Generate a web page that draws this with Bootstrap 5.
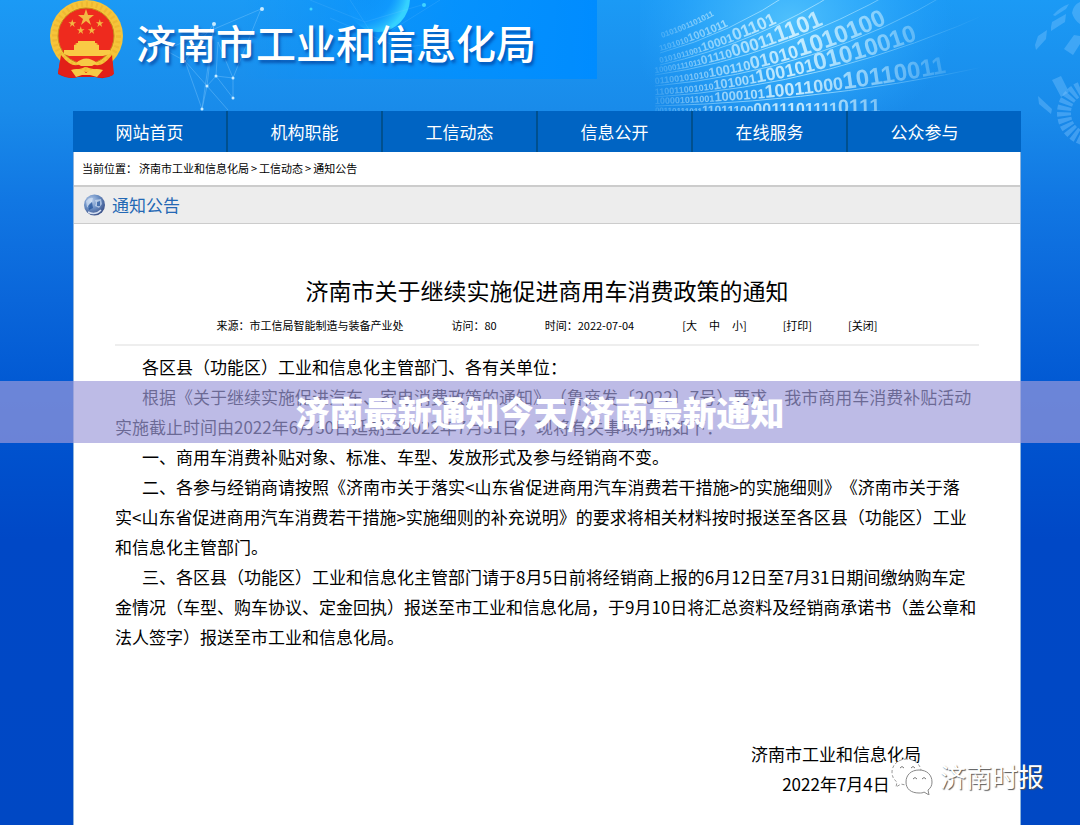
<!DOCTYPE html>
<html lang="zh-CN">
<head>
<meta charset="utf-8">
<meta name="viewport" content="width=device-width, initial-scale=1">
<title>济南市工业和信息化局 - 通知公告</title>
<link rel="stylesheet" href="https://cdn.jsdelivr.net/npm/bootstrap@5.3.0/dist/css/bootstrap.min.css">
<style>
  body {
    font-family: "Noto Sans CJK SC", sans-serif;
    color: #000;
    background: #0048c4;
    text-spacing-trim: space-all;
  }
  a { color: inherit; text-decoration: none; }
  .site {
    min-height: 100vh;
    padding: 0 59px 0 73px;
    overflow: hidden;
    background: linear-gradient(#1b9af5 0, #198bea 110px, #1177e3 200px, #0a66da 300px, #0057d2 400px, #0048c6 540px, #0048c4 100%);
  }
  .masthead { height: 111px; }
  .decor { position: absolute; top: 0; pointer-events: none; }
  .decor-left { left: 0; }
  .decor-right { right: 0; }
  .brand-row { margin-left: -24px; gap: 12px; height: 79px; }
  .site-name {
    font-size: 40px; line-height: 56px; font-weight: 500; color: #fff;
    text-shadow: 2px 3px 3px rgba(0, 50, 140, .6);
    margin: 4px 0 0;
  }
  .sheet { min-height: calc(100vh - 111px); }
  .page-side { border: solid #8fb4dc; border-width: 0 1px; }
  .main-menu { background: #0064c3; height: 41px; }
  .main-menu .nav-link {
    width: 155px; padding: 0; line-height: 41px; font-size: 17px; color: #fff;
    text-align: center; border-right: 2px solid #00508f;
  }
  .main-menu .nav-item:last-child .nav-link { border-right-color: transparent; }
  .crumbs { font-size: 11px; line-height: 33px; padding-left: 8px; gap: 2px; }
  .channel {
    height: 39px; padding-left: 9px; gap: 6px; background: #ededed;
    border-top: 2px solid #ccc; border-bottom: 1px solid #ccc;
  }
  .channel h2 { font-size: 17px; line-height: 36px; font-weight: 400; color: #2468b4; margin: 0; }
  .article { padding: 48px 41px 24px; }
  .article h1 { font-size: 23px; line-height: 36px; font-weight: 400; text-align: center; margin: 0; }
  .meta {
    font-size: 11px; line-height: 20px; padding: 7px 0 9px; gap: 36px;
    border-bottom: 2px solid #eee;
  }
  .meta .wide { margin-right: 12px; }
  .meta .sizes { gap: 12px; }
  .meta button { border: 0; padding: 0; background: none; color: inherit; }
  .content { font-size: 17px; line-height: 30px; margin-top: 6px; }
  .content p { margin: 0; text-indent: 27px; }
  .signature { font-size: 17px; line-height: 30px; margin: 87px 58px 0 0; }
  .headline-band {
    position: absolute; left: 0; right: 0; top: 381px;
    background: rgba(157, 155, 218, .68); color: #fff;
    font-size: 34px; line-height: 62px; font-weight: 900;
  }
  .watermark {
    position: absolute; right: 36px; top: 757px; gap: 6px;
    font-size: 26px; line-height: 38px; color: #fff;
    text-shadow: 1px 1px 1px #555;
  }
</style>
</head>
<body>
<div class="site position-relative">

  <svg class="decor decor-left" width="600" height="111" aria-hidden="true">
    <defs>
      <linearGradient id="panel" x1="0" x2="1"><stop offset="0" stop-color="#0090ff" stop-opacity="0"/><stop offset=".6" stop-color="#0090ff" stop-opacity=".8"/><stop offset="1" stop-color="#008cff"/></linearGradient>
      <radialGradient id="globe" cx=".2" cy=".3" r=".8"><stop offset="0" stop-color="#0a8df5" stop-opacity="0"/><stop offset=".7" stop-color="#129cff" stop-opacity=".6"/><stop offset="1" stop-color="#35d2ff"/></radialGradient>
    </defs>
    <rect x="240" width="357" height="79" fill="url(#panel)"/>
    <ellipse cx="378" cy="-2" rx="32" ry="34" fill="url(#globe)"/>
    <g fill="none" stroke="#8fd0ff" stroke-opacity=".35">
      <path d="M261 9 165 50 185 61 214 24 202 109M261 9 233 78M185 61 207 86 228 110M214 24 207 86M216 76 207 86 202 109M216 76 233 78 233 98 216 76 218 42 233 78M185 61 202 109"/>
      <path d="M310 0 365 22 425 4M330 18 400 48 460 40M350 0 376 40 440 0" stroke-opacity=".15"/>
    </g>
    <g fill="#c8ebff"><circle cx="262" cy="9" r="2"/><circle cx="214" cy="24" r="2"/><circle cx="185" cy="61" r="1"/><circle cx="216" cy="76" r="1.500"/><circle cx="207" cy="86" r="1.500"/><circle cx="233" cy="78" r="1.500"/><circle cx="233" cy="98" r="1.500"/><circle cx="202" cy="109" r="1.500"/></g>
    <g fill="#3fd4ff"><circle cx="311" cy="9" r="1.500"/><circle cx="424" cy="5" r="2"/></g>
  </svg>

  <svg class="decor decor-right" width="440" height="150" viewBox="640 0 440 150" aria-hidden="true">
    <defs>
      <radialGradient id="glow"><stop offset="0" stop-color="#5ccaff" stop-opacity=".8"/><stop offset=".5" stop-color="#40b8ff" stop-opacity=".5"/><stop offset="1" stop-color="#2aa4ff" stop-opacity="0"/></radialGradient>
      <linearGradient id="fade" x1="0" x2="1"><stop offset="0" stop-color="#fff" stop-opacity="0"/><stop offset=".12" stop-color="#fff" stop-opacity=".5"/><stop offset=".35" stop-color="#fff" stop-opacity=".9"/><stop offset=".55" stop-color="#fff" stop-opacity=".5"/><stop offset=".78" stop-color="#fff" stop-opacity="0"/></linearGradient>
      <mask id="sweep" maskUnits="userSpaceOnUse" x="640" y="0" width="440" height="111"><rect x="640" width="440" height="111" fill="url(#fade)"/></mask>
      <path id="w1" d="M655 113Q800 117 1040 108"/>
      <path id="w2" d="M655 104Q850 99 1040 52"/>
      <path id="w3" d="M655 95Q830 84 1000 6"/>
      <path id="w4" d="M655 84Q820 69 950 -10"/>
      <path id="w5" d="M655 73Q780 55 900 -14"/>
      <path id="w6" d="M660 63Q760 40 840 -12"/>
      <path id="w7" d="M660 51Q730 32 795 -12"/>
      <path id="w8" d="M662 38Q710 22 760 -12"/>
    </defs>
    <ellipse cx="790" cy="20" rx="165" ry="125" fill="url(#glow)"/>
    <g mask="url(#sweep)" fill="#d8f4ff" font-family="Liberation Sans, sans-serif" font-weight="700">
      <text font-size="8"><textPath href="#w1">00110111011<tspan font-size="12">11011100</tspan><tspan font-size="16">0011101111</tspan><tspan font-size="20">0111</tspan></textPath></text>
      <text font-size="9"><textPath href="#w2">100001011001<tspan font-size="13">1000101</tspan><tspan font-size="18">10011000</tspan><tspan font-size="24">10110011</tspan></textPath></text>
      <text font-size="9"><textPath href="#w3">110011001010<tspan font-size="13">101001</tspan><tspan font-size="18">100101</tspan><tspan font-size="24">01010010</tspan></textPath></text>
      <text font-size="9"><textPath href="#w4">01100101010<tspan font-size="13">100110</tspan><tspan font-size="18">01010</tspan><tspan font-size="24">1010100</tspan></textPath></text>
      <text font-size="8"><textPath href="#w5">10000111011<tspan font-size="12">01110</tspan><tspan font-size="17">00011</tspan><tspan font-size="23">1101</tspan></textPath></text>
      <text font-size="8"><textPath href="#w6">0101011001<tspan font-size="12">10001</tspan><tspan font-size="17">01101</tspan></textPath></text>
      <text font-size="8"><textPath href="#w7">1101010<tspan font-size="11">1001011</tspan></textPath></text>
      <text font-size="8"><textPath href="#w8">0101001101011</textPath></text>
      <g fill="none" stroke="#a8e2ff" stroke-width="1" transform="translate(0 2)">
        <use href="#w2"/><use href="#w3"/><use href="#w4"/><use href="#w5"/><use href="#w6"/><use href="#w7"/>
      </g>
    </g>
    <g fill="#7cc4ff" fill-opacity=".38">
      <path d="M1035 45 1038 36 1047 30 1046 39 1036 50ZM1051 27 1052 22 1066 14 1065 22 1051 31ZM1053 15Q1060 7 1069 4L1066 9 1055 16ZM1072 13Q1073 5 1080 2V24Q1074 20 1072 13ZM1064 49 1074 35 1080 36V44L1073 55ZM1052 80 1061 76 1069 92 1061 97ZM1038 96 1052 109 1051 114 1039 104Z"/>
    </g>
    <circle cx="1090" cy="113" r="26" fill="none" stroke="#7cc4ff" stroke-opacity=".4" stroke-width="14" stroke-dasharray="4 2"/>
  </svg>

  <header class="masthead position-relative">
    <div class="brand-row d-flex align-items-center">
      <svg width="75" height="79" viewBox="0 0 75 79" role="img" aria-label="国徽">
        <path d="M12 55 9 74Q20 80 29 77H46Q56 80 64 75L63 54Z" fill="#d81912"/>
        <ellipse cx="37.500" cy="36" rx="36.500" ry="36" fill="#f6c43a"/>
        <ellipse cx="37.500" cy="36" rx="32" ry="32" fill="none" stroke="#dfa01f" stroke-width="5" stroke-dasharray="2 3" opacity=".3"/>
        <ellipse cx="37" cy="36" rx="28" ry="28" fill="#ee2a1e" stroke="#c48a1b"/>
        <g fill="#f3b843">
          <path id="star" d="m37 9 2 6h6l-5 4 2 6-5-4-5 4 2-6-5-4h6z"/>
          <use href="#star" transform="translate(5.500 15) scale(.48)"/><use href="#star" transform="translate(33 15) scale(.48)"/>
          <use href="#star" transform="translate(14 22) scale(.48)"/><use href="#star" transform="translate(25 22) scale(.48)"/>
        </g>
        <path d="M15 54V50H25V45L28 44 26 43H29V41H46V43H49L47 44 50 45V50H61V54L54 56H20Z" fill="#f9ca45"/>
        <path d="M12 55Q23 69 31 64 37 55 44 64 52 69 63 55L65 74Q60 78 47 77L53 71 40 68Q36 66 34 68L22 71 28 77Q18 79 9 73Z" fill="#e22018"/>
        <path d="M27 63Q37 54 48 63L43 66H32ZM22 70Q31 67 37 73 44 67 54 70L48 77 41 75H33L27 77Z" fill="#f7ca45"/>
      </svg>
      <div class="site-name">济南市工业和信息化局</div>
    </div>
  </header>

  <div class="sheet position-relative bg-white d-flex flex-column">
    <nav class="main-menu">
      <ul class="nav">
        <li class="nav-item"><a class="nav-link" href="#">网站首页</a></li>
        <li class="nav-item"><a class="nav-link" href="#">机构职能</a></li>
        <li class="nav-item"><a class="nav-link" href="#">工信动态</a></li>
        <li class="nav-item"><a class="nav-link" href="#">信息公开</a></li>
        <li class="nav-item"><a class="nav-link" href="#">在线服务</a></li>
        <li class="nav-item"><a class="nav-link" href="#">公众参与</a></li>
      </ul>
    </nav>

    <div class="page-side flex-grow-1">
      <div class="crumbs d-flex"><span>当前位置：</span><a href="#">济南市工业和信息化局</a><span>&gt;</span><a href="#">工信动态</a><span>&gt;</span><a href="#">通知公告</a></div>

      <div class="channel d-flex align-items-center">
        <svg width="23" height="23" viewBox="0 0 23 23" aria-hidden="true">
          <defs><radialGradient id="ball" cx=".35" cy=".3" r=".75"><stop offset="0" stop-color="#b9cdea"/><stop offset=".5" stop-color="#6b8fc4"/><stop offset="1" stop-color="#3a4f86"/></radialGradient></defs>
          <circle cx="11.500" cy="11" r="10.500" fill="url(#ball)"/>
          <path d="M3 7Q6 3 10 4L9 8 6 10 7 14 4 13ZM12 6 18 5 19 10 16 14 12 12 13 9Z" fill="#e4eefc" opacity=".55"/>
          <path d="M5 12 9 8 10 14 6 16ZM14 8 17 7 17 12 14 12Z" fill="#1c4f98" opacity=".7"/>
          <path d="M5 18Q12 22 18 16" stroke="#d4def0" stroke-width="1.500" fill="none"/>
        </svg>
        <h2>通知公告</h2>
      </div>

      <article class="article">
        <h1>济南市关于继续实施促进商用车消费政策的通知</h1>
        <div class="meta d-flex justify-content-center">
          <span class="wide">来源：市工信局智能制造与装备产业处</span>
          <span class="wide">访问：80</span>
          <span class="wide">时间：2022-07-04</span>
          <span class="sizes d-flex"><span>[<button type="button">大</button></span><button type="button">中</button><span><button type="button">小</button>]</span></span>
          <button type="button">[打印]</button>
          <button type="button">[关闭]</button>
        </div>

        <div class="content">
          <p>各区县（功能区）工业和信息化主管部门、各有关单位：</p>
          <p>根据《关于继续实施促进汽车、家电消费政策的通知》（鲁商发〔2022〕7号）要求，我市商用车消费补贴活动实施截止时间由2022年6月30日延期至2022年7月31日，现将有关事项明确如下：</p>
          <p>一、商用车消费补贴对象、标准、车型、发放形式及参与经销商不变。</p>
          <p>二、各参与经销商请按照《济南市关于落实&lt;山东省促进商用汽车消费若干措施&gt;的实施细则》《济南市关于落<br>实&lt;山东省促进商用汽车消费若干措施&gt;实施细则的补充说明》的要求将相关材料按时报送至各区县（功能区）工业和信息化主管部门。</p>
          <p>三、各区县（功能区）工业和信息化主管部门请于8月5日前将经销商上报的6月12日至7月31日期间缴纳购车定金情况（车型、购车协议、定金回执）报送至市工业和信息化局，于9月10日将汇总资料及经销商承诺书（盖公章和法人签字）报送至市工业和信息化局。</p>
        </div>

        <div class="d-flex justify-content-end">
          <div class="signature text-center">济南市工业和信息化局<br>2022年7月4日</div>
        </div>
      </article>
    </div>
  </div>

  <div class="headline-band text-center">济南最新通知今天/济南最新通知</div>

  <div class="watermark d-flex align-items-center">
    <svg width="44" height="38" viewBox="0 0 44 38" aria-hidden="true">
      <path d="M17 2C8 2 2 8 2 15c0 5 2 8 5 10l-1 5 5-3c3 1 6 1 8 1L31 13C30 7 24 2 17 2Z" fill="#fff" stroke="#999" stroke-dasharray="3 2"/>
      <path d="M29 13c-8 0-13 5-13 12s5 11 13 11c2 0 4 0 5-1l5 3-1-5c3-2 4-5 4-8 0-7-5-12-13-12Z" fill="#fff" stroke="#888"/>
      <path d="M10 11q2-3 4 0M21 11q2-3 4 0M23 22q2-3 4 0M32 22q2-3 4 0" fill="none" stroke="#777"/>
    </svg>
    <span>济南时报</span>
  </div>
</div>
<script src="https://cdn.jsdelivr.net/npm/bootstrap@5.3.0/dist/js/bootstrap.bundle.min.js"></script>
</body>
</html>
